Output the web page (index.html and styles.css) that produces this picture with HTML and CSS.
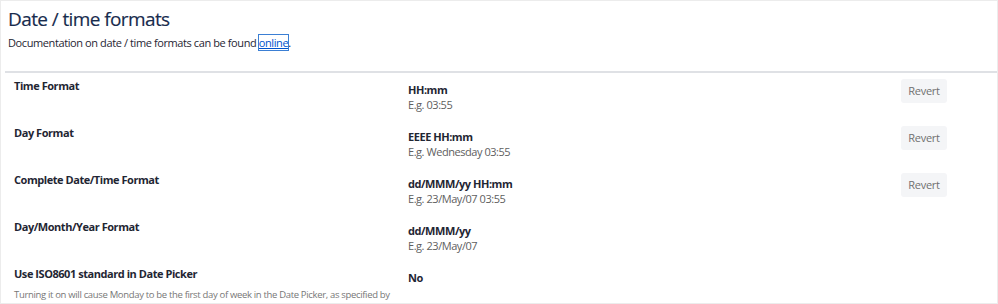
FILE: index.html
```html
<!DOCTYPE html>
<html>
<head>
<meta charset="utf-8">
<link rel="stylesheet" href="styles.css">
</head>
<body>
<div class="page">
  <header class="head">
    <h1 class="title">Date / time formats</h1>
    <p class="intro">Documentation on date / time formats can be found <a class="link" href="#">online</a>.</p>
  </header>
  <div class="settings">
    <div class="row">
      <div class="label">Time Format</div>
      <div class="value"><div class="fmt">HH:mm</div><div class="eg">E.g. 03:55</div></div>
      <div class="action"><button class="btn">Revert</button></div>
    </div>
    <div class="row">
      <div class="label">Day Format</div>
      <div class="value"><div class="fmt">EEEE HH:mm</div><div class="eg">E.g. Wednesday 03:55</div></div>
      <div class="action"><button class="btn">Revert</button></div>
    </div>
    <div class="row">
      <div class="label">Complete Date/Time Format</div>
      <div class="value"><div class="fmt">dd/MMM/yy HH:mm</div><div class="eg">E.g. 23/May/07 03:55</div></div>
      <div class="action"><button class="btn">Revert</button></div>
    </div>
    <div class="row">
      <div class="label">Day/Month/Year Format</div>
      <div class="value"><div class="fmt">dd/MMM/yy</div><div class="eg">E.g. 23/May/07</div></div>
      <div class="action"></div>
    </div>
    <div class="row">
      <div class="label">Use ISO8601 standard in Date Picker<div class="hint">Turning it on will cause Monday to be the first day of week in the Date Picker, as specified by</div></div>
      <div class="value"><div class="fmt">No</div></div>
      <div class="action"></div>
    </div>
  </div>
</div>
</body>
</html>
```
FILE: styles.css
```css
html, body { margin: 0; padding: 0; background: #fff; }
body { font-family: "Open Sans", "Noto Sans", sans-serif; color: #1f2633; }
.page { box-sizing: border-box; width: 998px; height: 304px; border: 1px solid #ececec; overflow: hidden; }
.head { margin-left: 4px; padding: 5px 0 0 3px; height: 72px; box-sizing: border-box; border-bottom: 2px solid #dfe1e5; }
.title { margin: 0; font-size: 19px; font-weight: 400; line-height: 26px; letter-spacing: -0.6px; color: #172b4d; -webkit-text-stroke: 0.15px #172b4d; }
.intro { margin: 3px 0 0; font-size: 11px; line-height: 16px; letter-spacing: -0.4px; color: #1f2633; }
.link { color: #0052cc; text-decoration: underline; outline: 1px solid #3b7fd4; outline-offset: 0; }
.settings { padding: 0 0 0 13px; }
.row { display: grid; grid-template-columns: 394px 1fr 96px; height: 47px; }
.label { padding-top: 5px; font-size: 11px; font-weight: 700; line-height: 16px; letter-spacing: -0.45px; color: #1f2633; }
.hint { margin-top: 6px; font-size: 9.5px; font-weight: 400; line-height: 14px; letter-spacing: -0.33px; color: #777; white-space: nowrap; }
.value { padding-top: 9px; }
.fmt { font-size: 11px; font-weight: 700; line-height: 15px; letter-spacing: -0.45px; color: #1f2633; }
.eg { font-size: 11px; line-height: 15px; letter-spacing: -0.45px; color: #606060; }
.action { padding-top: 5px; }
.btn { width: 46px; height: 24px; border: 0; border-radius: 3px; background: #f4f5f7; color: #707070; font-family: "Open Sans", sans-serif; font-size: 11px; letter-spacing: -0.3px; padding: 0; }
```
